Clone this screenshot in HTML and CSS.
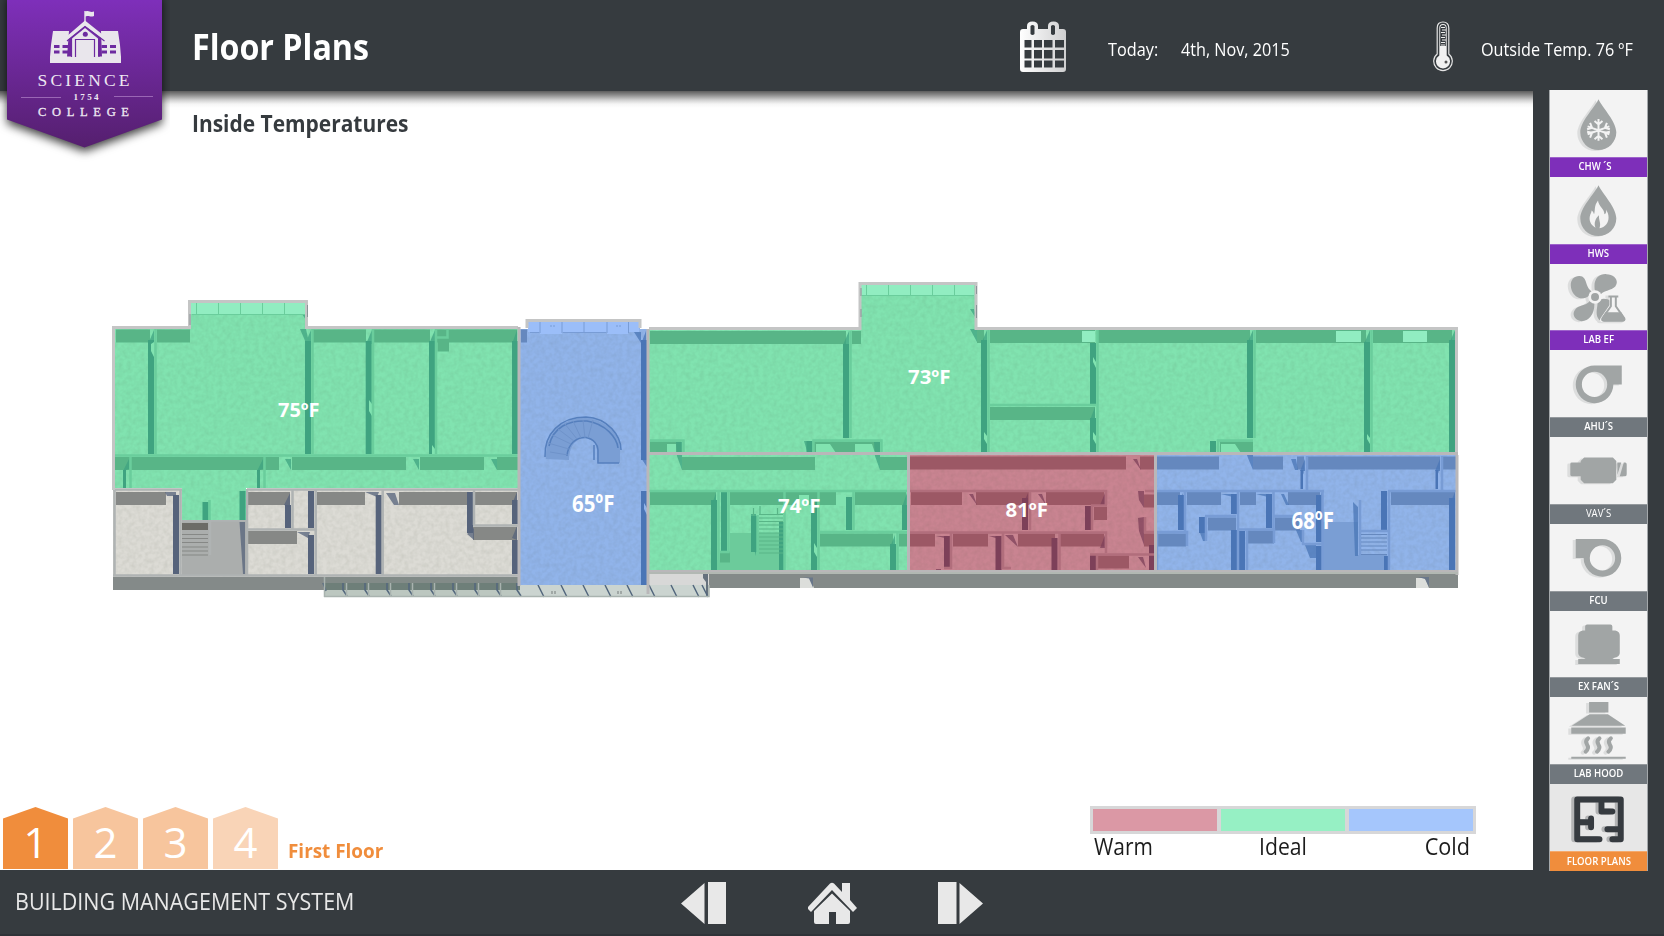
FILE: index.html
```html
<!DOCTYPE html>
<html lang="en">
<head>
<meta charset="utf-8">
<title>Floor Plans</title>
<link rel="stylesheet" href="styles.css">
</head>
<body>
<div class="app">
  <svg class="badge" viewBox="0 0 170 165">
    <defs>
      <linearGradient id="purple" x1="0" y1="0" x2="0" y2="1"><stop offset="0" stop-color="#8030bd"/><stop offset="1" stop-color="#551f6e"/></linearGradient>
    </defs>
    <path class="badge-shape" d="M7 -6H162V119.500L84.500 147.500L7 119.500Z" fill="url(#purple)"/>
    <g class="badge-art">
      <path d="M53 31H69L67 57H50L51 45Z M101 31H118L120 45L121 57H102Z"/>
      <path d="M50 56.500H121V63H50Z"/>
      <path d="M85 20.500L105 36.500V41L85 26L66.500 41V36.500Z"/>
      <path d="M85 28L98 38.500V57H72V38.500Z"/>
      <path d="M84.300 11H85.700V23H84.300Z M85.700 11.500C89 10 90 13 94 11.500V16C90 17.500 89 15 85.700 16.500Z"/>
      <path class="hole" d="M54 45h5.500v3H54z M62.500 45H68v3h-5.500z M54 50.500h5.500v3H54z M62.500 50.500H68v3h-5.500z M101.500 45h5.500v3h-5.500z M110 45h6v3h-6z M101.500 50.500h5.500v3h-5.500z M110 50.500h6v3h-6z"/>
      <circle class="hole" cx="85.300" cy="34.300" r="2.500"/>
      <path class="slit" d="M67 41L85 26.500L104.500 41 M71.500 38V57 M99 38V57 M75.500 57V39.500H94.500V57"/>
    </g>
    <path class="badge-rule" d="M21 97.500H61 M114 96.500H153"/>
    <text class="college" x="37.500" y="86" font-size="17.500" textLength="92">SCIENCE</text>
    <text class="college year" x="73.500" y="100" font-size="9" textLength="25">1754</text>
    <text class="college lower" x="38" y="115.700" font-size="12.500" textLength="91">COLLEGE</text>
  </svg>

  <header class="header">
    <h1 class="title"><span class="fit fit-title">Floor Plans</span></h1>
    <svg class="calendar" viewBox="0 0 46 52">
      <defs><linearGradient id="silver"><stop offset="0" stop-color="#fff"/><stop offset="1" stop-color="#cfcfd0"/></linearGradient></defs>
      <path fill="url(#silver)" fill-rule="evenodd" d="M3 8H7V5Q7 .5 12.500 .5T18 5V8H28V5Q28 .5 33.500 .5T39 5V8H43Q46 8 46 11V48Q46 51 43 51H3Q0 51 0 48V11Q0 8 3 8Z M10.500 5V13Q12.500 15 14.500 13V5Q12.500 3 10.500 5Z M31 5V13Q33 15 35 13V5Q33 3 31 5Z M4.500 19v7.500h7v-7.500z M14 19v7.500h8v-7.500z M24 19v7.500h8.500v-7.500z M35 19v7.500h9v-7.500z M4.500 29v8.500h7v-8.500z M14 29v8.500h8v-8.500z M24 29v8.500h8.500v-8.500z M35 29v8.500h9v-8.500z M4.500 39.500v7h7v-7z M14 39.500v7h8v-7z M24 39.500v7h8.500v-7z M35 39.500v7h9v-7z"/>
    </svg>
    <span class="info info-label"><span class="fit fit-today">Today:</span></span>
    <span class="info info-date"><span class="fit fit-date">4th, Nov, 2015</span></span>
    <svg class="thermometer" viewBox="0 0 20 52">
      <path d="M4.200 33V7Q4.200 1 10 1T15.800 7V33A9.300 9.300 0 1 1 4.200 33Z" fill="none" stroke="#e4e4e4" stroke-width="1.200"/>
      <path d="M6.300 7Q6.300 3 10 3T13.700 7V34.500A7 7 0 1 1 6.300 34.500Z" fill="#f1f1f1"/>
      <path d="M7.200 7Q7.200 4 10 4T12.800 7V25H7.200Z" fill="#363b3f"/>
      <path d="M8 6.500h4 M9 9h4 M8 11.500h4 M9 14h4 M8 16.500h4 M9 19h4 M8 21.500h4 M8 24h4" stroke="#eee" stroke-width="1.200"/>
      <circle cx="13" cy="41" r="1.500" fill="#555"/>
    </svg>
    <span class="info info-temp"><span class="fit fit-temp">Outside Temp. 76 ºF</span></span>
  </header>

  <div class="middle">
    <main class="content">
      <h2 class="subtitle"><span class="fit fit-subtitle">Inside Temperatures</span></h2>

      <svg class="plan" viewBox="100 275 1370 330">
        <defs>
          <!-- carpet grain for room floors -->
          <filter id="grain" x="0" y="0" width="1" height="1" color-interpolation-filters="sRGB">
            <feTurbulence type="fractalNoise" baseFrequency=".22" numOctaves="2" seed="4" result="noise"/>
            <feColorMatrix in="noise" type="matrix" values="0 0 0 0 .25  0 0 0 0 .28  0 0 0 0 .2  .16 0 0 0 -.055" result="specks"/>
            <feComposite in="specks" in2="SourceGraphic" operator="in" result="inside"/>
            <feMerge><feMergeNode in="SourceGraphic"/><feMergeNode in="inside"/></feMerge>
          </filter>
        </defs>
        <!-- unconditioned rooms -->
        <g class="zone off">
          <path class="floor" d="M113 489H520V577H113Z"/>
          <path class="landing" d="M182 520H246V575H182Z"/>
          <path class="face" d="M116 498.500H166 M248 498.500H290 M248 537.500H297 M317 498.500H365 M399 498.500H470 M475 498.500H517 M473 533.500H517"/>
          <path class="side" d="M176 495V574 M288 505V528 M311 491V528 M311 535V574 M378.700 495V574 M470 492V533 M515 500V524 M515 540V574"/>
          <path class="dark" d="M182 523h26v7h-26z"/>
          <path class="shade" d="M239.500 522H245V574H243Z M165 492h11v4h-9z M297 532h13l-2 6z M365 492h14l-2 5z M386 493h9l4 12h-5z M467 534l7-6v12z M284 505l6-12v14z M512 504l5-12v14z M512 538l5-12v14z"/>
          <path class="step" d="M182 534.500h26 M182 538.500h26 M182 542.500h26 M182 547h26 M182 551h26 M182 555h26"/>
          <path class="cap" d="M114.500 489V576 M113 489.500H182 M180.500 489V576 M182 520.500H246 M247 489V576 M247 489.500H520 M292.500 489V529 M247 529.500H316 M315.700 489V576 M382.700 489V576 M474 489V525 M473 525.500H518 M113 575.500H520 M210 520V555"/>
        </g>
        <path class="plinth" d="M113 577H325V590H113Z M709 574H1458V588H709Z"/>
        <path class="floor-gap" d="M800 578h10l4 10h-14z M1416 578h9l4 10h-13z"/>
        <path class="shade-line" d="M803 577.500h10v10l-4-9z M1418 577h11v10l-4-8z"/>
        <g class="canopy">
          <path d="M325 577H520V597H325Z" fill="#bcc7c0"/>
          <path d="M325 577H520V583H325Z" fill="#828b88"/>
          <path d="M325 583H520V590H325Z" fill="#6e7f79"/>
          <path d="M520 585H709V597H520Z" fill="#cbd4d0"/>
          <path d="M649 573H709V585H649Z" fill="#d8d8d7"/>
          <path d="M703 574h5v22h-2v-14l-3-4z" fill="#65717d"/>
          <path class="slash" d="M323 583l3 8 M343 583v7l4 6 M365 583v7l4 6 M387 583v7l4 6 M409 583v7l4 6 M431 583v7l4 6 M453 583v7l4 6 M475 583v7l4 6 M497 583v7l4 6 M517 583v7l4 6 M538 585l6 12 M561 585l6 12 M583 585l6 12 M605 585l6 12 M627 585l6 12 M649 585l6 12 M671 585l6 12 M693 585l6 12 M702 585l6 12"/>
          <path class="rail" d="M324.500 577V597 M346.500 583V597 M368.500 583V597 M390.500 583V597 M412.500 583V597 M434.500 583V597 M456.500 583V597 M478.500 583V597 M500.500 583V597 M324 596.500H709V585"/>
          <path class="step" d="M552 591v3 M555 591v3 M618 591v3 M621 591v3"/>
        </g>

        <!-- west wing -->
        <g class="zone ideal">
          <path class="floor" d="M114 328H190V302H306V328H519V488H246V520H182V488H114Z"/>
          <path class="glass" d="M190 302.500H306V314H190Z"/>
          <path class="face" d="M116 336H150 M157 336H190 M312 336H366 M374 336H430 M437 336H517 M437.500 345H449 M113 463.500H279 M292 463.500H406 M420 463.500H484 M497 463.500H519"/>
          <path class="side" d="M151 340V454 M308 341V454 M368.700 341V454 M432 341V454 M515 341V454 M242.500 491V520 M205.500 502V520"/>
          <path class="side thin" d="M124.500 470V488 M258.500 470V488"/>
          <path class="shade" d="M148 344l6-14v14z M300 329h6l3 14h-3z M305 344l6-14v14z M366 344l6-14v14z M429 344l6-14v14z M512 344l5-14v14z M285 459h6v11z M413 459h6v11z M491 459h6v11z M123 471l6-12v10z M257 471l6-12v10z M302 314h4v6z"/>
          <path class="door" d="M151 344l3-2v15l-3-6z M369 400l3 4v12l-3-5z M432 445l3 4v5h-3z"/>
          <path class="cap" d="M155.500 329V454 M312.500 329V454 M373 329V454 M436 329V454 M114 455.500H518 M130.500 457V488 M264.500 457V488 M209.500 500V520 M437 337.500H447.500V329"/>
          <path class="mullion" d="M196.500 303V314 M218.500 303V314 M240.500 303V314 M262.500 303V314 M284.500 303V314 M192 314.500H306"/>
        </g>

        <!-- east wing -->
        <g class="zone ideal">
          <path class="floor" d="M649 329H861V284H975V329H1457V453H649Z M649 453H908V571H649Z"/>
          <path class="landing" d="M730 533H783V571H717V560H730Z"/>
          <path class="glass" d="M861 284.500H974V295H861Z"/>
          <path class="face" d="M650 337.500H846 M852 337.500H861 M977 336.500H984 M990 336.500H1095 M990 413.500H1095 M1098 336.500H1250 M1256 336.500H1366 M1373 336.500H1452 M682 463.500H815 M880 463.500H908 M650 498.500H716 M730 498.500H836 M855 498.500H906 M820 540H893 M899 540H908"/>
          <path class="face low" d="M650 447H681 M814 447H880 M1220 447H1253 M720 557H730"/>
          <path class="side" d="M846 344V438 M984 340V453 M1093 343V404 M1093 418V453 M1250 340V438 M1367 342V453 M1452 340V453 M1213 441V453 M809.500 441V453 M714 500V571 M724 492V551 M754 516V552 M782 522V571 M814 500V571 M849 497V530 M893 544V571 M905 505V530"/>
          <path class="shade" d="M843 345l6-14v14z M970 329h7v13z M981 344l6-14v14z M1090 420l5-13v13z M1247 344l6-14v14z M1364 344l6-14v14z M1449 344l6-14v14z M676 442h6v28l-5-14z M874 442h6v28l-5-14z M711 507l5-14v14z M751 514h5v42l-4-14z M970 309h4l3 11z M902 507l5-14v14z M890 547l5-12v12z M804 441l3 0v10z"/>
          <path class="door" d="M667 444h9v9h-9z M816 444h14l6 9h-20z M855 444h17l3 9h-20z M1221 444h14l6 9h-20z M799 495h10v11h-10z M836 495h10v11h-10z M1093 357l3 5v6l-3-6z M984 432l3 4v8l-3-5z M1093 432l3 4v8l-3-5z M1367 434l3 4v6l-3-5z M814 543l3 5v9l-3-5z"/>
          <path class="bright" d="M1082 331H1095V342H1082Z M1336 331H1361V342H1336Z M1403 331H1427V342H1403Z"/>
          <path class="cap" d="M850.500 331V438 M988.500 330V453 M1097.500 330V453 M990 405H1096 M1254.500 330V438 M1371.500 330V453 M1218 453V440.500H1253 M650 440.500H683.500V453 M813.500 453V440.500H881.500V453 M649 491H908 M718.500 491V571 M728.500 491V552H720 M784.500 491V571 M818.500 491V571 M853.500 491V530 M820 532H908 M897.500 533V571 M757.500 515V555 "/>
          <path class="step" d="M759 514.500h24 M759 518h24 M759 521.500h24 M759 525h24 M759 529h24 M759 533h24 M759 537h24 M759 541h24 M759 545h24 M759 549h24 M759 553h24 M753.500 508v8 M760 506v8 M777.500 508v6"/>
          <path class="mullion" d="M866.500 285V295 M888.500 285V295 M910.500 285V295 M932.500 285V295 M954.500 285V295 M862 295.500H974"/>
        </g>

        <!-- lobby -->
        <g class="zone cold">
          <path class="floor" d="M528 321H640V329H648V585H520V329H528Z"/>
          <path class="glass" d="M528 321.500H540V332H528Z M540 321.500H562V334H540Z M562 321.500H607V332H562Z M607 321.500H628V334H607Z M628 321.500H639V332H628Z"/>
          <path class="face" d="M521 336H527"/>
          <path class="side" d="M644 340V460 M644 491V585"/>
          <path class="shade" d="M634 332h7v11z M641 344l5-13v14z M641 458h6v9z"/>
          <path class="door" d="M644 503l3 5v7l-3-6z"/>
          <path class="mullion" d="M540 321V333 M562 321V333 M584 321V332 M607 321V333 M628.500 321V333 M563 332.500H606 M530 332.500H539 M551 325v2 M554 325v2 M617 325v2 M620 325v2"/>
          <path class="spiral" d="M546 459C545 434 561 418 585 418C607 419 620 436 620 448V463H597V452C597 440 589 437 583 438C573 440 569 450 569 460Z"/>
          <path class="spiral-edge" d="M545 457C544 434 560 417 586 417C608 418 621 436 621 450 M549 446C553 427 569 420 587 421C606 424 617 438 618 448 M567 456C568 444 576 437 586 437.500C594 439 598 445 598 450V463H619 M594 445V460"/>
          <path class="treads" d="M550 452L568 455 M548 443L569 449 M552 435L571 444 M558 429L574 441 M565 424L577 439 M573 421L581 438 M583 420L585 438 M593 420L588 438"/>
        </g>

        <!-- warm rooms -->
        <g class="zone warm">
          <path class="floor" d="M908 455H1156V570H908Z"/>
          <path class="face" d="M909 463H1126 M1140 463H1155 M911 498.500H962 M976 498.500H1029 M1046 498.500H1104 M1094 513.500H1107 M909 540H935 M953 540H988 M1018 540H1055 M1060 540H1104 M1098 562H1129 M1144 501H1155 M1144 540H1155"/>
          <path class="side" d="M1025 498V530 M1088 506V530 M947 536V567 M998.500 536V571 M1054.500 538V571 M1093 555V571 M1152 545V571"/>
          <path class="shade" d="M1133 459h4l4 11z M969 494h4l4 11z M1038 494h4l4 11z M1022 506l6-13v13z M1100 505l5-12v12z M1138 491h6v17l-5-8z M1138 518l6-1v28l-5-14z M1005 535h8l5 12z M1100 548l5-13v13z M936 536h13v3z M989 536h10v3z M1138 557h5l3 11z M936 569h5v3h-5z"/>
          <path class="cap" d="M910 491H1106V505 M1030 491V530 M1091 505.500H1107 M1092 505V530 M909 532.500H1106V553 M951 533V568H944 M1003 533V568H1011 M1059.500 533V571 M1090 554.500H1155 M1097 555V571 M1145 491H1155 M1145 517V532H1155"/>
        </g>

        <!-- south-east rooms -->
        <g class="zone cold">
          <path class="floor" d="M1156 455H1457V570H1156Z"/>
          <path class="landing" d="M1322 522H1358V555H1387V571H1322Z"/>
          <path class="face" d="M1156 463H1219 M1253 463H1283 M1297 463H1304 M1308 463H1440 M1443 463H1458 M1156 498.500H1180 M1187 498.500H1221 M1240 498.500H1256 M1288 498.500H1320 M1391 498.500H1455 M1158 540H1186 M1208 524H1236 M1248 537H1274 M1275 524H1300"/>
          <path class="side" d="M1181 495V530 M1234 494V514 M1269 494V528 M1319 495V542 M1384 491V530 M1452 498V571 M1234 530V571 M1242 531V571 M1319 546V571 M1202 517V533 M1387 556V571"/>
          <path class="side thin" d="M1302 470V489 M1437 470V489"/>
          <path class="shade" d="M1247 455h6v15l-5-12z M1291 459h5l2 11h-3z M1178 506l5-13v13z M1221 494h12v3z M1256 494h12v3z M1281 494h3l5 11h-3z M1316 506l6-14v14z M1449 506l6-14v14z M1300 471l5-12v12z M1435 471l5-12v12z M1199 530h6v11h-2z M1296 530h7v12h-2z M1305 545h11v13h-6z M1353 502l5 5v49h-3z"/>
          <path class="door" d="M1303 473l2 3v13h-2z M1438 472l2 3v14h-2z"/>
          <path class="cap" d="M1156 491H1324 M1388 491H1458 M1307 456V490 M1442 456V490 M1185 491V532 M1156 532H1187V546 M1238 491V571 M1205 516H1236 M1206 516V541 M1273.500 491V529 M1239 529.500H1274V543 M1247 531V571 M1274 516H1300 M1303 530V544H1323 M1322.500 491V571 M1389 491V571 M1360 500V555 M1361 531H1388 M1157 533V571"/>
          <path class="step" d="M1361 534.500h26 M1361 538h26 M1361 542h26 M1361 546h26 M1361 550h26 M1361 554.500h26"/>
        </g>

        <!-- outer shell -->
        <path class="shell" d="M113.500 490V327.500H189.500V301.500H306.500V327.500H518 M527 328V320.500H640V328 M649 328.500H860V283.500H976V328.500H1456.500V455"/>
        <path class="shell inner" d="M519 327V586 M648 329V594 M648 453.500H1458 M908.500 455V571 M1155.500 455V571 M1457 455V575 M649 571.500H1458"/>
        <path class="shell base" d="M649 573H1458"/>
        <path class="shell-line" d="M190 314V325 M307.500 305v12 M976.500 286v8 M976.500 305v13 M861 288v8 M861 309v8"/>

        <g class="temps">
          <text x="278" y="417" font-size="20" textLength="41.500" lengthAdjust="spacingAndGlyphs">75ºF</text>
          <text x="572" y="512" font-size="24" textLength="42.500" lengthAdjust="spacingAndGlyphs">65ºF</text>
          <text x="778" y="513" font-size="20" textLength="42.500" lengthAdjust="spacingAndGlyphs">74ºF</text>
          <text x="908" y="384" font-size="20" textLength="42.500" lengthAdjust="spacingAndGlyphs">73ºF</text>
          <text x="1005.500" y="517" font-size="20" textLength="42.500" lengthAdjust="spacingAndGlyphs">81ºF</text>
          <text x="1291.500" y="529" font-size="24" textLength="42.500" lengthAdjust="spacingAndGlyphs">68ºF</text>
        </g>
      </svg>

      <div class="bottom-row">
        <div class="floors">
          <button class="floor-tab tab-1">1</button>
          <button class="floor-tab tab-2">2</button>
          <button class="floor-tab tab-3">3</button>
          <button class="floor-tab tab-4">4</button>
          <span class="floor-name"><span class="fit fit-floor">First Floor</span></span>
        </div>
        <div class="legend">
          <div class="swatches"><i class="swatch warm-swatch"></i><i class="swatch ideal-swatch"></i><i class="swatch cold-swatch"></i></div>
          <div class="legend-labels"><span class="fit fit-warm">Warm</span><span class="fit fit-ideal">Ideal</span><span class="fit fit-cold">Cold</span></div>
        </div>
      </div>
    </main>

    <nav class="sidebar">
      <a class="item primary">
        <svg class="icon" viewBox="0 0 98 66"><path d="M49 8.500C53 17 67 31 67 42A18.200 18 0 0 1 30.600 42C30.600 31 45 17 49 8.500Z"/>
          <path class="flake" d="M49 28.500V50.500 M38 36L60 44 M38 44L60 36 M45 30.500L49 34L53 30.500 M45 49L49 45.500L53 49 M40.500 32.500L42.500 37.500L37.500 39 M57.500 32.500L55.500 37.500L60.500 39 M37.500 41.500L42.500 42.500L40.500 47.500 M60.500 41.500L55.500 42.500L57.500 47.500"/></svg>
        <span class="caption"><span class="fit fit-cap shift">CHW ´S</span></span>
      </a>
      <a class="item primary">
        <svg class="icon" viewBox="0 0 98 66"><path d="M49 7.500C53 16 67 30 67 41A18.200 18 0 0 1 30.600 41C30.600 30 45 16 49 7.500Z"/>
          <path class="cut" d="M48.500 23C49 29 55 31 55 37C57 36 57 34 56.500 32C60 37 60 43 57 47C55 49.500 53 50.500 50 51C52 46 49 43 49.500 38C46 41 44 46 46 50.500C41 48 39 43 40.500 38C41 36 42 35 42 33C44 34 44 36 44.500 37C46 33 44 29 48.500 23Z"/></svg>
        <span class="caption"><span class="fit fit-cap">HWS</span></span>
      </a>
      <a class="item primary">
        <svg class="icon" viewBox="0 0 98 66">
          <path d="M45.500 27C43 15 49 9 57 9.500C65 10 69 15 67 20C65 26 56 25 51 30Z M40 31C32 37 25 33 22 26C19 18 23 11 30 11.500C38 12 35 22 42 27Z M45 39C45 51 39 57 32 57C25 56 22 50 25 46C29 40 35 43 41 36Z M50 35C58 33 63 36 65 44L50 56C45 51 48 44 48 39Z"/>
          <circle class="hub" cx="45.500" cy="32.600" r="6.800"/><circle cx="45.500" cy="32.600" r="4"/>
          <path class="flask-bg" d="M59 30H69V33L68 34V41L77 54Q78 58 74 58H54Q49 58 51 54L60 41V34Z"/>
          <path class="flask-line" d="M59 32H69 M61.500 32V42L53 54Q52 56.500 55 56.500H73Q76 56.500 75 54L66.500 42V32"/>
          <path d="M56 48H72L76 55Q76 57 74 57H54Q51 57 52.500 54Z"/></svg>
        <span class="caption"><span class="fit fit-cap">LAB EF</span></span>
      </a>
      <a class="item">
        <svg class="icon" viewBox="0 0 98 66"><path fill-rule="evenodd" d="M45 15H72.500V34H64A19 19 0 1 1 45 15Z M45 21.200A12.800 12.800 0 1 0 45 46.800A12.800 12.800 0 1 0 45 21.200Z"/></svg>
        <span class="caption"><span class="fit fit-cap">AHU´S</span></span>
      </a>
      <a class="item">
        <svg class="icon" viewBox="0 0 98 66"><path d="M34.500 20H63.500L67 23.500V42.500L63.500 46H34.500L31 42.500V39H22Q20.500 39 20.500 37.500V26.500Q20.500 25 22 25H31V23.500Z M68 25H72L68 38Z M74.500 25H76Q77.500 25 77.500 27V37Q77.500 39 76 39H70.500Z"/></svg>
        <span class="caption"><span class="fit fit-cap light">VAV´S</span></span>
      </a>
      <a class="item">
        <svg class="icon" viewBox="0 0 98 66"><path fill-rule="evenodd" d="M26 14.500H53A19 19 0 1 1 34 33.500H26Z M53 20.700A12.800 12.800 0 1 0 53 46.300A12.800 12.800 0 1 0 53 20.700Z"/></svg>
        <span class="caption"><span class="fit fit-cap">FCU</span></span>
      </a>
      <a class="item">
        <svg class="icon" viewBox="0 0 98 66"><path d="M37.500 13H61Q63 13 63 15V19H66Q70.500 20 70.500 24V42Q70 46 65 46.500L63 47.700H70.500V52.700H28.500V47.700H36L34 46.500Q29 46 28.500 42V24Q28.500 20 33 19H35.500V15Q35.500 13 37.500 13Z"/></svg>
        <span class="caption"><span class="fit fit-cap">EX FAN´S</span></span>
      </a>
      <a class="item">
        <svg class="icon" viewBox="0 0 98 66"><path d="M39.500 4.300H59V15H39.500Z M40 16.700H58.500L76 28.300H22Z M21.500 30H76.500V36.300H21.500Z"/>
          <path class="steam" d="M38.500 41Q35 44 37.500 47.500T36 54.500 M50 41Q46.500 44 49 47.500T47.500 54.500 M61.500 41Q58 44 60.500 47.500T59 54.500"/><path class="rule" d="M21.500 60.600H76.500"/></svg>
        <span class="caption"><span class="fit fit-cap">LAB HOOD</span></span>
      </a>
      <a class="item active">
        <svg class="icon" viewBox="0 0 98 66"><path class="plan-icon" d="M50 55H27.500V15H71.500V55H63 M52 15V27H63 M27.500 38H41.500 M41.500 34V43 M58 45H71.500"/></svg>
        <span class="caption"><span class="fit fit-cap">FLOOR PLANS</span></span>
      </a>
    </nav>
  </div>

  <footer class="footer">
    <span class="system"><span class="fit fit-system">BUILDING MANAGEMENT SYSTEM</span></span>
    <div class="controls">
      <svg width="46" height="43" viewBox="0 0 46 43"><path d="M0 21.500L23.500 1V42Z M27 0H45V42H27Z"/></svg>
      <svg width="50" height="43" viewBox="1 0 50 43"><path d="M23 1.500Q25 0 27 1.500L35 10V1H43V18L50 26L46 30L25 8L4 30L0 26Z M25 11.500L43 29V40Q43 42 41 42H29V30H22V42H9Q7 42 7 40V29Z"/></svg>
      <svg width="46" height="43" viewBox="0 0 46 43"><path d="M0 0H18.500V42H0Z M21.500 1L45 21.500L21.500 42Z"/></svg>
    </div>
  </footer>
</div>
</body>
</html>
```
FILE: styles.css
```css
* { box-sizing: border-box; }
body { margin: 0; background: #363b3f; font-family: "Open Sans", "Noto Sans", sans-serif; }
.app { position: relative; display: flex; flex-direction: column; width: 1664px; height: 936px; overflow: hidden; background: #363b3f; }

/* Text squeezed to a narrow, humanist width */
.fit { display: inline-block; white-space: nowrap; transform-origin: 0 50%; }
.fit-title { transform: scaleX(.92); }
.fit-subtitle { transform: scaleX(.91); }
.fit-today { transform: scaleX(.93); }
.fit-date, .fit-temp { transform: scaleX(.925); }
.fit-floor { transform: scaleX(.945); }
.fit-system { transform: scaleX(.934); }
.fit-warm { transform: scaleX(.91); }
.fit-ideal { transform: scaleX(.92); transform-origin: 50% 50%; }
.fit-cold { transform: scaleX(.94); transform-origin: 100% 50%; }
.fit-cap { transform: scaleX(.87); transform-origin: 50% 50%; }

/* College badge hangs over the header and the content */
.badge { position: absolute; left: 0; top: 0; z-index: 3; width: 170px; height: 165px; }
.badge-shape { filter: drop-shadow(0 4px 5px rgba(0, 0, 0, .75)); }
.badge-art { fill: #e9e6ec; }
.badge-art .hole { fill: #6d2ba0; }
.badge-art .slit { fill: none; stroke: #6d2ba0; stroke-width: 1.200; }
.badge-rule { stroke: #9a66b5; stroke-width: 1; }
.college { font-family: "Liberation Serif", serif; fill: #eee8f2; }
.year { font-weight: bold; }
.lower { stroke: #eee8f2; stroke-width: .3px; }

.header { display: flex; flex: none; height: 91px; color: #fff; }
.title { width: 828px; margin: 22px 0 0 191.500px; font-size: 35px; line-height: 50px; font-weight: 700; }
.calendar { width: 46px; height: 52px; margin-top: 21px; }
.info { height: 28px; margin-top: 35px; font-size: 17.500px; line-height: 28px; }
.info-label { width: 73px; margin-left: 42px; }
.info-date { width: 252px; }
.thermometer { width: 20px; height: 52px; margin-top: 21px; }
.info-temp { margin-left: 28px; white-space: nowrap; }

.middle { display: flex; flex: none; height: 779px; }
.content { display: flex; flex-direction: column; width: 1533px; background: linear-gradient(#5c5c5c, #8c8c8c 4px, #d0d0d0 9px, #f5f5f5 13px, #fff 17px); }
.subtitle { height: 36px; margin: 14px 0 134px 191.500px; font-size: 23px; line-height: 36px; font-weight: 700; color: #363b3f; }
.plan { width: 1370px; height: 330px; margin-left: 100px; }

.zone .floor { fill: var(--floor); filter: url(#grain); }
.zone .landing, .zone .spiral { fill: var(--landing); }
.zone .glass, .zone .bright { fill: var(--glass); }
.zone .door { fill: var(--floor); }
.zone .dark { fill: #6c6c67; }
.zone .face { fill: none; stroke: var(--face); stroke-width: 13px; }
.zone .low { stroke-width: 11px; }
.zone .side { fill: none; stroke: var(--side); stroke-width: 6px; }
.zone .thin { stroke-width: 3px; }
.zone .shade { fill: var(--side); opacity: .75; }
.zone .cap { fill: none; stroke: var(--cap); stroke-width: 2.500px; }
.zone .mullion, .zone .spiral-edge, .zone .treads { fill: none; stroke: var(--cap); stroke-width: 1px; }
.zone .spiral-edge { stroke: #557fbd; stroke-width: 1.500px; }
.zone .treads { stroke: #6f93ca; }
.step { fill: none; stroke: var(--face, #858b8b); stroke-width: 1.200px; }
.off { --floor: #dcdbd5; --landing: #abaead; --face: #868886; --side: #56637b; --cap: #afb3b3; }
.ideal { --floor: #81e3b0; --landing: #6ccb9b; --glass: #91edc1; --face: #58b587; --side: #3fa380; --cap: #6acd9c; }
.cold { --floor: #91b4ea; --landing: #7a9ed4; --glass: #9bbef9; --face: #6588be; --side: #4a75b6; --cap: #789cd5; }
.warm { --floor: #c98491; --landing: #b5707d; --face: #9c5865; --side: #7d4059; --cap: #b16e7c; }
.plinth { fill: #848a89; }
.floor-gap { fill: #dcdedb; }
.shade-line { fill: #69778a; }
.slash { fill: none; stroke: #53677d; stroke-width: 1.500px; }
.rail { fill: none; stroke: #a9b3af; stroke-width: 1.500px; }
.shell { fill: none; stroke: #c4c5c5; stroke-width: 3px; }
.shell.inner { stroke: #b9b7b9; }
.shell.base { stroke: #b2b8b3; stroke-width: 2px; }
.shell-line { stroke: #8c9297; stroke-width: 1px; }
.temps { fill: #fff; font-weight: 700; }

.bottom-row { display: flex; justify-content: space-between; height: 64px; margin-top: auto; padding: 0 57px 0 3px; }
.floors { display: flex; gap: 5px; height: 63px; }
.floor-tab { width: 65px; height: 62px; margin: 1px 0 0; padding: 7px 0 0; border: 0; clip-path: polygon(50% 0, 100% 11.500px, 100% 100%, 0 100%, 0 11.500px); font-family: inherit; font-size: 42px; line-height: 52px; color: #fff; }
.tab-1 { background: #f08d3c; }
.tab-2, .tab-3 { background: #f7c59d; }
.tab-4 { background: #f9d4b7; }
.floor-name { margin: 31px 0 0 5px; font-size: 20px; line-height: 28px; font-weight: 700; color: #f08d3c; }
.legend { width: 386px; }
.swatches { display: flex; gap: 4px; height: 28px; padding: 3px; background: #d7d7d8; }
.swatch { flex: 1; }
.warm-swatch { background: #db98a5; }
.ideal-swatch { background: #96f0c4; }
.cold-swatch { background: #a5c6fc; }
.legend-labels { display: grid; grid-template-columns: 155px auto auto; justify-content: start; padding-left: 4px; font-size: 23px; line-height: 25px; color: #1c1c1c; }
.legend-labels .fit-ideal { width: 68px; text-align: center; }
.legend-labels .fit-cold { width: 153px; text-align: right; }

.sidebar { display: grid; grid-template-rows: repeat(9, 1fr); width: 98.500px; height: 781px; margin: -1px 0 0 16px; }
.item { display: flex; flex-direction: column; min-height: 0; background: #f3f3f3; border: solid #a4a8ab; border-width: 0 1px; --label: #70777d; }
.icon { flex: 1; min-height: 0; width: 97px; overflow: hidden; fill: #a1a5a5; filter: drop-shadow(-3px 1px 0 #dcdddd); }
.caption { flex: none; height: 20px; background: var(--label); border-top: 1px solid rgba(255, 255, 255, .25); color: #fff; font-size: 11px; line-height: 16px; font-weight: 600; text-align: center; }
.caption .light { font-weight: 400; }
.caption .shift { position: relative; left: -3px; }
.primary { --label: #7e2fba; }
.active { background: #e7e7e7; --label: #f08d3c; }
.active .icon { filter: drop-shadow(-3px 0 0 #b3b4b5); }
.active .caption { line-height: 18px; }
.flake { fill: none; stroke: #f3f3f3; stroke-width: 2px; }
.cut, .hub, .flask-bg { fill: #f3f3f3; }
.flask-line { fill: none; stroke: #a1a5a5; stroke-width: 2px; }
.steam { fill: none; stroke: #a1a5a5; stroke-width: 4px; stroke-linecap: round; }
.rule { stroke: #a1a5a5; stroke-width: 2px; }
.plan-icon { fill: none; stroke: #363b40; stroke-width: 6px; stroke-linecap: round; stroke-linejoin: round; }

.footer { display: flex; flex: none; align-items: flex-start; height: 66px; border-bottom: 2px solid #2f3338; color: #e8e8e8; }
.system { width: 666px; margin: 14px 0 0 15px; font-size: 23px; line-height: 35px; }
.controls { display: flex; justify-content: space-between; width: 303px; margin-top: 12px; fill: #e8e8e8; }
```
